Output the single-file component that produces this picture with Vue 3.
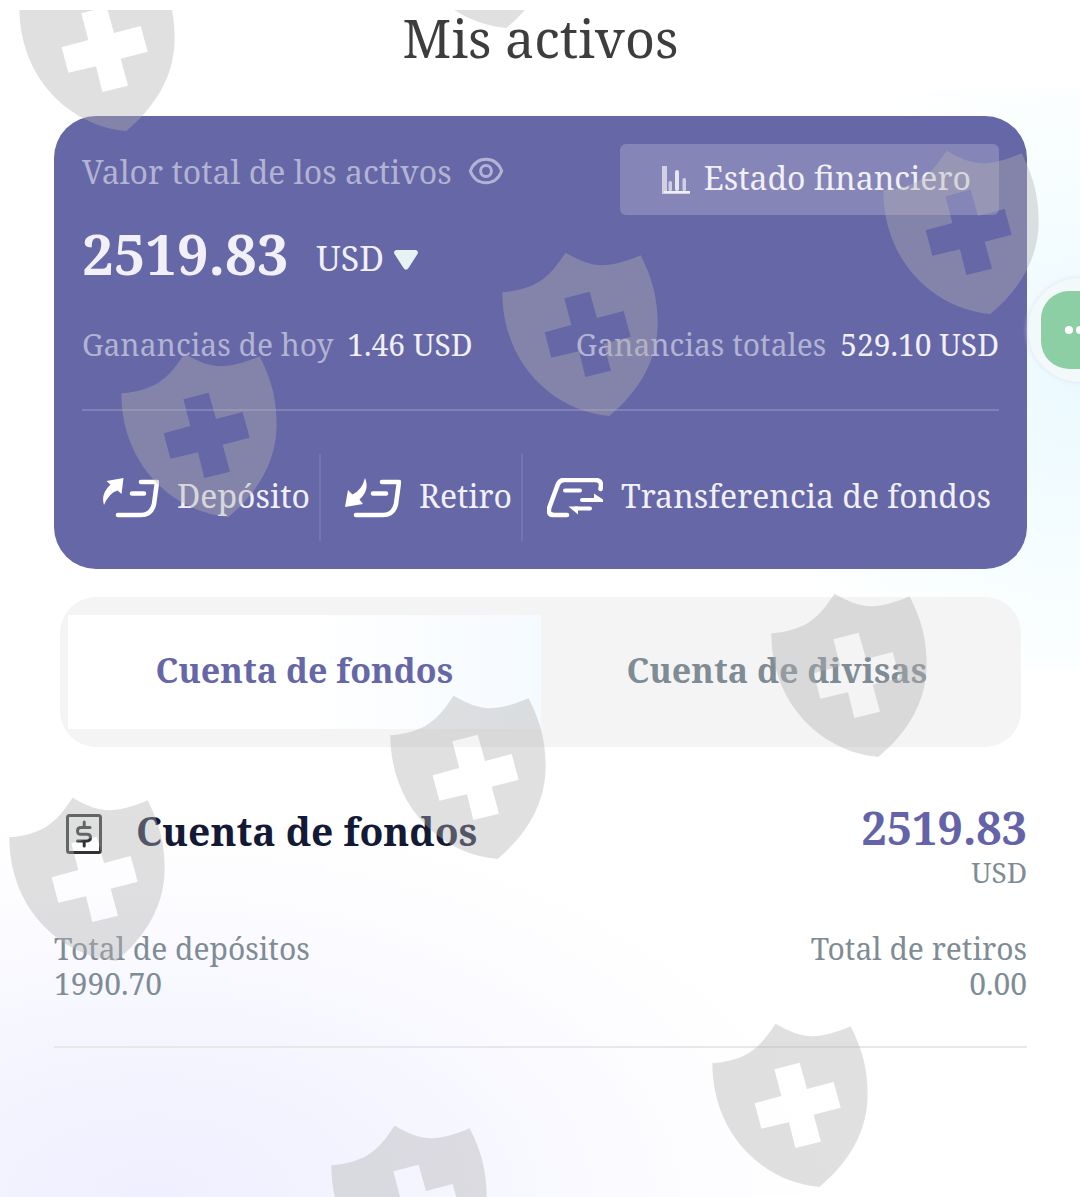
<script setup>
import { ref } from "vue";

const hidden = ref(false);
const currency = ref("USD");
const activeTab = ref("fondos");

const tabs = [
  { id: "fondos", label: "Cuenta de fondos" },
  { id: "divisas", label: "Cuenta de divisas" },
];

// watermark positions, one shield each
const shields = [
  [-3, -55],
  [377, -158],
  [480, 230],
  [861, 128],
  [99, 331],
  [749, 571],
  [368, 673],
  [-13, 775],
  [690, 1001],
  [309, 1103],
];

const show = (value) => (hidden.value ? "****" : value);
</script>

<template>
  <main class="page">
    <h1 class="title">Mis activos</h1>

    <section class="card">
      <div class="card-head">
        <div class="label">
          <span>Valor total de los activos</span>
          <button class="eye" type="button" aria-label="Ocultar" @click="hidden = !hidden">
            <svg width="36" height="28" viewBox="0 0 36 28">
              <path d="M2.300 14C5 7 10.500 2.300 18 2.300S31 7 33.700 14C31 21 25.500 25.700 18 25.700S5 21 2.300 14Z" />
              <circle cx="18" cy="14" r="5.400" />
            </svg>
          </button>
        </div>
        <button class="report" type="button">
          <svg width="28" height="28" viewBox="0 0 28 28">
            <path d="M0 0h5v25h23v3H0z" opacity=".7" />
            <path d="M2 25h26v2H2z" />
            <rect x="6.500" y="15" width="3.500" height="10" rx="1.500" opacity=".7" />
            <rect x="13" y="4" width="4" height="21" rx="2" opacity=".9" />
            <rect x="20.500" y="12" width="3.500" height="13" rx="1.500" opacity=".7" />
          </svg>
          Estado financiero
        </button>
      </div>

      <div class="total">
        <strong>{{ show("2519.83") }}</strong>
        <label class="currency">
          <select v-model="currency" aria-label="Moneda">
            <option>USD</option>
            <option>EUR</option>
          </select>
          <svg width="24" height="20" viewBox="0 0 24 20">
            <path d="M2 0H22Q25 1 23.500 4L14.500 18Q12 21.500 9.500 18L.5 4Q-1 1 2 0Z" />
          </svg>
        </label>
      </div>

      <div class="gains">
        <p><span>Ganancias de hoy</span> {{ show("1.46") }} USD</p>
        <p><span>Ganancias totales</span> {{ show("529.10") }} USD</p>
      </div>

      <nav class="actions">
        <a href="#deposito">
          <svg width="56" height="40" viewBox="0 0 56 40">
            <path class="fill" d="M3.500 3L20.500 0L18.500 16L14.500 12.500Q6 15 1 27Q-2.500 16 7.500 6.500Z" />
            <path d="M38 4H54L51 26Q48.500 37 38 37H15M29 15.500H41" />
          </svg>
          Depósito
        </a>
        <a href="#retiro">
          <svg width="56" height="40" viewBox="0 0 56 40">
            <path class="fill" d="M0 29L3 12L7.500 16.500Q17 12 20 0Q25 12 14.500 21.500L18 26Z" />
            <path d="M37 4H54L51 26Q48.500 37 38 37H11M28 15.500H41" />
          </svg>
          Retiro
        </a>
        <a href="#transferencia">
          <svg width="56" height="40" viewBox="0 0 56 40">
            <path d="M53.500 11L54 8Q54.500 2 48 2H17Q13 2 11 6L2.500 29Q0 37 7 37H20" />
            <path class="thin" d="M18 12.500H33M35 22H50M28 30.500H43" />
            <path class="fill" d="M47 15.500L56 21.500V24H47ZM21.500 28.500H31V36.500Z" />
          </svg>
          Transferencia de fondos
        </a>
      </nav>
    </section>

    <div class="tabs" role="tablist">
      <button
        v-for="tab in tabs"
        :key="tab.id"
        type="button"
        role="tab"
        :aria-selected="activeTab === tab.id"
        :class="{ active: activeTab === tab.id }"
        @click="activeTab = tab.id"
      >
        {{ tab.label }}
      </button>
    </div>

    <section class="account">
      <div class="account-head">
        <svg class="bill" width="36" height="40" viewBox="0 0 36 40">
          <rect x="1.500" y="1.500" width="33" height="37" rx="2" />
          <path d="M24 13.500H15Q11.500 13.500 11.500 17T15 20.300H21Q24.500 20.300 24.500 23.600T21 27H11.500M18.200 8V13.500M18.200 27V32" />
        </svg>
        <h2>Cuenta de fondos</h2>
        <div class="balance">
          <strong>2519.83</strong>
          <span>USD</span>
        </div>
      </div>
      <div class="account-totals">
        <p>Total de depósitos<br />1990.70</p>
        <p>Total de retiros<br />0.00</p>
      </div>
    </section>

    <svg class="watermark" aria-hidden="true">
      <defs>
        <path
          id="shield"
          transform="scale(.33333)"
          fill-rule="evenodd"
          d="M67 157C178 146 208 109 257 38C330 80 374 92 482 46C520 121 533 180 533 255C531 363 476 455 388 528C224 514 67 374 67 157ZM253 175L329 155L351 234L431 213L452 290L371 311L393 392L316 411L297 334L214 353L194 277L274 255Z"
        />
      </defs>
      <use v-for="([x, y], i) in shields" :key="i" href="#shield" :x="x" :y="y" />
    </svg>

    <button class="chat" type="button" aria-label="Chat">
      <span>
        <svg width="40" height="8" viewBox="0 0 40 8">
          <circle cx="4" cy="4" r="4" />
          <circle cx="15" cy="4" r="4" />
          <circle cx="26" cy="4" r="4" />
        </svg>
      </span>
    </button>
  </main>
</template>

<style>
body {
  margin: 0;
}
</style>

<style scoped>
.page {
  position: relative;
  box-sizing: border-box;
  min-height: 100vh;
  padding: 0 53px 0 54px;
  overflow: hidden;
  font-family: "Noto Serif", "Droid Serif", "DejaVu Serif", serif;
  color: #7f8c95;
  background:
    radial-gradient(circle 340px at 100% 50%, #ebf9ff 0, #f8feff 65%, #fff 100%) right 88px / 320px 582px no-repeat,
    radial-gradient(ellipse 700px 400px at 14% 100%, #efefff 0, #f5f5ff 40%, #fdfdff 80%, #fff 100%) #fff;
}

h1,
h2,
p {
  margin: 0;
}

button,
select {
  padding: 0;
  border: 0;
  background: none;
  font: inherit;
  color: inherit;
  cursor: pointer;
}

.title {
  margin-bottom: 40px;
  font-size: 52px;
  font-weight: 400;
  line-height: 76px;
  text-align: center;
  color: #3d3d3d;
}

.card {
  padding: 28px;
  border-radius: 42px;
  background: #6667a7;
  color: #f1f0f8;
}

.card-head,
.gains,
.account-totals {
  display: flex;
  justify-content: space-between;
}

.label {
  display: flex;
  align-items: center;
  gap: 16px;
  height: 54px;
  font-size: 32px;
  color: #b3b3d3;
}

.eye {
  display: flex;
}

.eye svg {
  fill: none;
  stroke: currentColor;
  stroke-width: 3;
}

.report {
  display: flex;
  align-items: center;
  gap: 14px;
  height: 71px;
  padding: 0 28px 4px 42px;
  border-radius: 6px;
  background: #8685b7;
  font-size: 32px;
}

.report svg,
.currency svg {
  fill: currentColor;
}

.total {
  display: flex;
  align-items: center;
  gap: 28px;
  height: 76px;
  font-size: 56px;
}

.currency {
  display: flex;
  align-items: center;
  gap: 10px;
  padding-top: 10px;
  font-size: 34px;
}

.currency select {
  appearance: none;
}

.currency svg {
  margin-top: 4px;
  color: #e6f3f2;
}

.gains {
  margin-top: 34px;
  padding-bottom: 44px;
  border-bottom: 2px solid #8281b5;
  font-size: 30px;
  line-height: 40px;
}

.gains span {
  margin-right: 6px;
  color: #b3b3d3;
}

.actions {
  display: flex;
  margin-top: 43px;
}

.actions a {
  display: flex;
  box-sizing: border-box;
  align-items: center;
  gap: 18px;
  height: 87px;
  padding: 0 9px 4px 24px;
  border-right: 2px solid #7574ad;
  font-size: 32px;
  white-space: nowrap;
  color: inherit;
  text-decoration: none;
}

.actions a:first-child {
  padding-left: 21px;
}

.actions a:last-child {
  padding-right: 0;
  border: 0;
}

.actions svg,
.report svg {
  flex: none;
  margin-top: 4px;
}

.actions svg {
  fill: none;
  stroke: #fff;
  stroke-width: 4.600;
  stroke-linecap: round;
  stroke-linejoin: round;
}

.actions .thin {
  stroke-width: 4;
}

.actions .fill {
  fill: #fff;
  stroke: none;
}

.tabs {
  display: flex;
  margin: 28px 6px 0;
  padding: 18px 8px;
  border-radius: 36px;
  background: #f4f4f4;
}

.tabs button {
  flex: 1;
  height: 114px;
  padding-bottom: 4px;
  font-size: 34px;
  font-weight: 700;
}

.tabs .active {
  background: linear-gradient(90deg, #fff 50%, #f5faff);
  color: #6667a7;
}

.account {
  margin-top: 54px;
  padding-bottom: 45px;
  border-bottom: 2px solid #e8e8e8;
}

.account-head {
  display: flex;
  align-items: flex-start;
}

.bill {
  margin: 13px 34px 0 12px;
  fill: none;
  stroke: #303436;
  stroke-width: 3;
  stroke-linecap: round;
}

.account h2 {
  font-size: 39px;
  line-height: 60px;
  color: #131a36;
}

.balance {
  display: flex;
  flex-direction: column;
  margin-left: auto;
  text-align: right;
  font-size: 28px;
  line-height: 36px;
}

.balance strong {
  font-size: 45px;
  line-height: 53px;
  color: #6462a8;
}

.account-totals {
  margin-top: 41px;
  font-size: 30px;
  line-height: 35px;
}

.account-totals p:last-child {
  text-align: right;
}

.watermark {
  position: absolute;
  top: 10px;
  left: 0;
  width: 100%;
  height: calc(100% - 10px);
  fill: #b1b1b1;
  fill-opacity: 0.4;
  pointer-events: none;
}

.chat {
  position: absolute;
  top: 278px;
  right: -52px;
  padding: 13px;
  border-radius: 50%;
  background: #f3f8fa;
  box-shadow: 0 0 5px #dde6ea;
}

.chat span {
  display: flex;
  align-items: center;
  width: 54px;
  height: 78px;
  padding-left: 24px;
  border-radius: 28px;
  background: #8dcfa4;
}

.chat svg {
  fill: #fff;
}
</style>
